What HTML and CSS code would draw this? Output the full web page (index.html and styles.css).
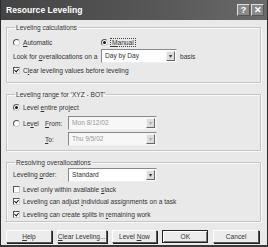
FILE: index.html
```html
<!DOCTYPE html>
<html lang="en">
<head>
<meta charset="UTF-8" />
<title>Resource Leveling</title>
<link rel="stylesheet" href="styles.css">
</head>
<body>

<div class="dialog">
  <div class="titlebar">
    <span class="title">Resource Leveling</span>
    <span class="tbtn">?</span>
    <span class="tbtn">&#x2715;</span>
  </div>

  <div class="content">
    <fieldset class="group g1">
      <legend>Leveling calculations</legend>
      <div class="row">
        <label class="opt w-auto"><span class="radio"></span><span><u>A</u>utomatic</span></label>
        <label class="opt"><span class="radio on"></span><span class="focus"><u>M</u>anual</span></label>
      </div>
      <div class="row">
        <span class="lbl-look">Look for <u>o</u>verallocations on a</span>
        <span class="combo c-basis"><span class="val">Day by Day</span><span class="arrow">&#9662;</span></span>
        <span>basis</span>
      </div>
      <div class="row">
        <label class="opt"><span class="check on"></span><span>C<u>l</u>ear leveling values before leveling</span></label>
      </div>
    </fieldset>

    <fieldset class="group g2">
      <legend>Leveling range for 'XYZ - BOT'</legend>
      <div class="row">
        <label class="opt"><span class="radio on"></span><span>Level <u>e</u>ntire project</span></label>
      </div>
      <div class="row">
        <label class="opt w-level"><span class="radio"></span><span>Le<u>v</u>el</span></label>
        <span class="lbl-date"><u>F</u>rom:</span>
        <span class="combo off"><span class="val">Mon 8/12/02</span><span class="arrow">&#9662;</span></span>
      </div>
      <div class="row">
        <span class="w-level"></span>
        <span class="lbl-date"><u>T</u>o:</span>
        <span class="combo off"><span class="val">Thu 9/5/02</span><span class="arrow">&#9662;</span></span>
      </div>
    </fieldset>

    <fieldset class="group g3">
      <legend>Resolving overallocations</legend>
      <div class="row">
        <span class="lbl-order">Leveling <u>o</u>rder:</span>
        <span class="combo"><span class="val">Standard</span><span class="arrow">&#9662;</span></span>
      </div>
      <div class="row">
        <label class="opt"><span class="check"></span><span>Level only within available <u>s</u>lack</span></label>
      </div>
      <div class="row">
        <label class="opt"><span class="check on"></span><span>Leveling can adjust <u>i</u>ndividual assignments on a task</span></label>
      </div>
      <div class="row">
        <label class="opt"><span class="check on"></span><span>Leveling can create splits in <u>r</u>emaining work</span></label>
      </div>
    </fieldset>

    <div class="buttons">
      <button><u>H</u>elp</button>
      <button><u>C</u>lear Leveling...</button>
      <button>Level <u>N</u>ow</button>
      <button class="default">OK</button>
      <button>Cancel</button>
    </div>
  </div>
</div>

</body>
</html>
```

FILE: styles.css
```css
body {
  margin: 0;
  background: #fff;
  font-family: "Liberation Sans", Arial, sans-serif;
  font-size: 6.6px;
  color: #333;
}
.dialog {
  width: 268px;
  height: 247px;
  box-sizing: border-box;
  background: #e9e9e9;
  border: 1px solid #2a2a2a;
  border-top: none;
  border-bottom: 2px solid #3a3a3a;
  display: flex;
  flex-direction: column;
}
.titlebar {
  height: 20px;
  background: linear-gradient(90deg, #444, #585858 60%, #6a6a6a);
  display: flex;
  align-items: center;
  padding: 0 3px 0 5px;
  gap: 1px;
}
.title {
  flex: 1;
  color: #fff;
  font-weight: bold;
  font-size: 8.6px;
}
.tbtn {
  width: 13px;
  height: 12px;
  box-sizing: border-box;
  border: 1px solid #ddd;
  border-right-color: #555;
  border-bottom-color: #555;
  background: #8a8a8a;
  color: #fff;
  font-weight: bold;
  font-size: 9px;
  line-height: 10px;
  text-align: center;
}
.content {
  flex: 1;
  padding: 2px 6px 0 5px;
  display: flex;
  flex-direction: column;
}
.group {
  margin: 0;
  min-width: 0;
  border: 1px solid #c4c4c4;
  box-shadow: inset 1px 1px 0 #fafafa, 1px 1px 0 #fafafa;
  padding: 0 6px;
  display: flex;
  flex-direction: column;
}
.group legend {
  padding: 0 1px;
  margin-left: 2px;
  line-height: 9px;
}
.g1 { height: 58px; margin-top: 1px; }
.g2 { height: 59px; margin-top: 7px; }
.g3 { height: 62px; margin-top: 7px; }
.row {
  display: flex;
  align-items: center;
  height: 14px;
  white-space: nowrap;
}
.g1 .row:first-of-type { margin-top: 3px; }
.g2 .row { height: 16px; }
.g3 .row { height: 12.5px; }
.g3 .row:first-of-type { height: 15px; margin-bottom: 1px; }
.opt {
  display: flex;
  align-items: center;
  gap: 3px;
}
.w-auto { width: 88px; }
.w-level { width: 32px; }
.focus { outline: 1px dotted #444; padding: 0 1px; }
.radio {
  width: 7px;
  height: 7px;
  box-sizing: border-box;
  border-radius: 50%;
  border: 1px solid #555;
  border-right-color: #ccc;
  border-bottom-color: #ccc;
  background: #fff;
  display: flex;
  align-items: center;
  justify-content: center;
}
.radio.on::after {
  content: "";
  width: 3px;
  height: 3px;
  border-radius: 50%;
  background: #111;
}
.check {
  width: 7px;
  height: 7px;
  box-sizing: border-box;
  border: 1px solid #555;
  border-right-color: #ccc;
  border-bottom-color: #ccc;
  background: #fff;
  position: relative;
}
.check.on::after {
  content: "";
  position: absolute;
  left: 1px;
  top: 0;
  width: 2px;
  height: 3px;
  border: solid #111;
  border-width: 0 1px 1px 0;
  transform: rotate(40deg);
}
.lbl-look { width: 88px; }
.lbl-date { width: 23px; }
.lbl-order { width: 55px; }
.combo {
  display: flex;
  width: 89px;
  height: 14px;
  box-sizing: border-box;
  border: 1px solid #888;
  border-right-color: #eee;
  border-bottom-color: #eee;
  background: #fff;
  padding: 1px;
}
.c-basis { width: 76px; margin-right: 3px; }
.combo .val {
  flex: 1;
  padding-left: 2px;
  line-height: 10px;
}
.combo .arrow {
  width: 9px;
  box-sizing: border-box;
  border: 1px solid #f4f4f4;
  border-right-color: #666;
  border-bottom-color: #666;
  background: #ddd;
  font-size: 6px;
  line-height: 9px;
  text-align: center;
}
.combo.off { background: #f7f7f7; color: #999; }
.combo.off .arrow { color: #aaa; }
.buttons {
  display: flex;
  gap: 5px;
  margin-top: 8px;
  padding-right: 2px;
}
.buttons button {
  flex: 1;
  height: 13px;
  padding: 0;
  margin: 0;
  white-space: nowrap;
  font-family: inherit;
  font-size: 6.6px;
  color: #333;
  background: #ececec;
  border: 1px solid #fff;
  border-right-color: #555;
  border-bottom-color: #555;
  box-shadow: 1px 1px 0 #222;
}
.buttons button.default {
  border: 1px solid #222;
  box-shadow: inset 1px 1px 0 #fff, inset -1px -1px 0 #777;
}
```
